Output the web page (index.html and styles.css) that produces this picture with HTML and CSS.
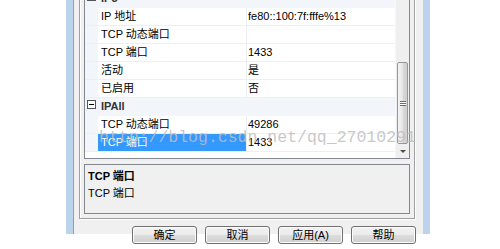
FILE: index.html
```html
<!DOCTYPE html>
<html lang="zh-CN">
<head>
  <meta charset="UTF-8">
  <title>TCP/IP 属性</title>
  <link rel="stylesheet" href="styles.css">
</head>
<body>
  <div class="window">
    <div class="frame">
      <div class="group">
        <div class="grid">
          <div class="rows">
            <div class="row cat">
              <span class="margin"><svg class="toggle" width="9" height="9" viewBox="0 0 9 9"><rect x="0.5" y="0.5" width="8" height="8" fill="#fff" stroke="#555"/><path d="M2 4.5h5" stroke="#000"/></svg></span>
              <span class="name">IP5</span>
            </div>
            <div class="row"><span class="margin"></span><span class="name">IP 地址</span><span class="value">fe80::100:7f:fffe%13</span></div>
            <div class="row"><span class="margin"></span><span class="name">TCP 动态端口</span><span class="value"></span></div>
            <div class="row"><span class="margin"></span><span class="name">TCP 端口</span><span class="value">1433</span></div>
            <div class="row"><span class="margin"></span><span class="name">活动</span><span class="value">是</span></div>
            <div class="row"><span class="margin"></span><span class="name">已启用</span><span class="value">否</span></div>
            <div class="row cat">
              <span class="margin"><svg class="toggle" width="9" height="9" viewBox="0 0 9 9"><rect x="0.5" y="0.5" width="8" height="8" fill="#fff" stroke="#555"/><path d="M2 4.5h5" stroke="#000"/></svg></span>
              <span class="name">IPAll</span>
            </div>
            <div class="row"><span class="margin"></span><span class="name">TCP 动态端口</span><span class="value">49286</span></div>
            <div class="row selected"><span class="margin"></span><span class="name">TCP 端口</span><span class="value">1433</span></div>
          </div>
          <div class="scrollbar">
            <div class="track"></div>
            <div class="thumb"><span class="grip"></span></div>
            <div class="arrow-down"><span class="tri"></span></div>
          </div>
        </div>
        <div class="help">
          <div class="help-title">TCP 端口</div>
          <div class="help-text">TCP 端口</div>
        </div>
      </div>
      <div class="buttons">
        <button class="btn">确定</button>
        <button class="btn">取消</button>
        <button class="btn">应用(A)</button>
        <button class="btn">帮助</button>
      </div>
    </div>
  </div>
  <div class="watermark">http://blog.csdn.net/qq_27010291</div>
</body>
</html>
```

FILE: styles.css
```css
* {
  box-sizing: border-box;
}
body {
  margin: 0;
  width: 500px;
  height: 249px;
  overflow: hidden;
  position: relative;
  background: #fff;
  color: #000;
  font-family: "Liberation Sans", "Noto Sans CJK SC", sans-serif;
  font-size: 11px;
}
.window {
  margin-left: 66px;
  width: 364px;
  height: 249px;
  border-left: 7px solid #bcd3ec;
  border-right: 7px solid #bcd3ec;
}
.frame {
  height: 100%;
  background: #f0f0f0;
  border-left: 1px solid #8e9fb0;
  padding-left: 5px;
}
.group {
  width: 336px;
  margin-top: -15px;
  padding: 3px 4px 4px 4px;
  border: 1px solid #a0a0a0;
  box-shadow: 1px 1px 0 #fff, inset 1px 1px 0 #fff;
}
.grid {
  display: flex;
  height: 170px;
  background: #fff;
  border: 1px solid #828790;
}
.rows {
  width: 310px;
}
.row {
  display: flex;
  height: 18px;
  line-height: 17px;
  border-bottom: 1px solid #eceff4;
}
.margin {
  width: 13px;
  background: #f2f5fa;
}
.name {
  width: 148px;
  padding-left: 3px;
  white-space: nowrap;
}
.value {
  width: 149px;
  padding-left: 1px;
  border-left: 1px solid #eceff4;
  white-space: nowrap;
}
.cat {
  background: #f2f5fa;
  border-bottom-color: #f2f5fa;
}
.cat .name {
  width: 297px;
  font-weight: bold;
  color: #333;
}
.toggle {
  display: block;
  margin: 2px 0 0 2px;
}
.selected .name {
  background: #3399ff;
  color: #fff;
}
.scrollbar {
  width: 14px;
  display: flex;
  flex-direction: column;
  background: #efefef;
  border-left: 1px solid #f7f7f7;
}
.track {
  flex: 1;
}
.thumb {
  height: 82px;
  margin: 0 1px 0 1px;
  border: 1px solid #979797;
  border-radius: 2px;
  background: linear-gradient(to right, #f4f4f4, #e6e6e6 50%, #d8d8d8 51%, #cfcfcf);
  display: flex;
  align-items: center;
  justify-content: center;
}
.grip {
  width: 6px;
  height: 5px;
  border-top: 1px solid #6a6a6a;
  border-bottom: 1px solid #6a6a6a;
  background: linear-gradient(#fff 0 1px, #6a6a6a 1px 2px, #fff 2px 3px);
  background-size: 100% 3px;
  background-position: 0 0;
  background-repeat: no-repeat;
  margin-top: 1px;
}
.arrow-down {
  height: 14px;
  display: flex;
  align-items: center;
  justify-content: center;
}
.tri {
  width: 0;
  height: 0;
  border-top: 3px solid #4d4d4d;
  border-left: 3px solid transparent;
  border-right: 3px solid transparent;
}
.help {
  height: 50px;
  margin-top: 5px;
  padding: 4px 3px;
  border: 1px solid #828790;
  background: #f0f0f0;
}
.help-title {
  font-weight: bold;
  line-height: 15px;
}
.help-text {
  margin-top: 2px;
  line-height: 15px;
}
.buttons {
  display: flex;
  justify-content: flex-end;
  gap: 8px;
  margin-top: 7px;
  padding-right: 7px;
}
.btn {
  width: 65px;
  height: 18px;
  padding: 0;
  border: 1px solid #707070;
  border-radius: 3px;
  background: linear-gradient(#f2f2f2, #ebebeb 50%, #dddddd 51%, #cfcfcf);
  box-shadow: inset 0 0 0 1px #fcfcfc;
  font-family: "Liberation Sans", "Noto Sans CJK SC", sans-serif;
  font-size: 11px;
  line-height: 16px;
  color: #000;
}
.watermark {
  position: absolute;
  left: 99px;
  top: 129px;
  font-family: "Liberation Mono", monospace;
  font-size: 16.5px;
  line-height: 17px;
  color: rgba(190, 190, 190, 0.85);
  white-space: nowrap;
  pointer-events: none;
}
```
